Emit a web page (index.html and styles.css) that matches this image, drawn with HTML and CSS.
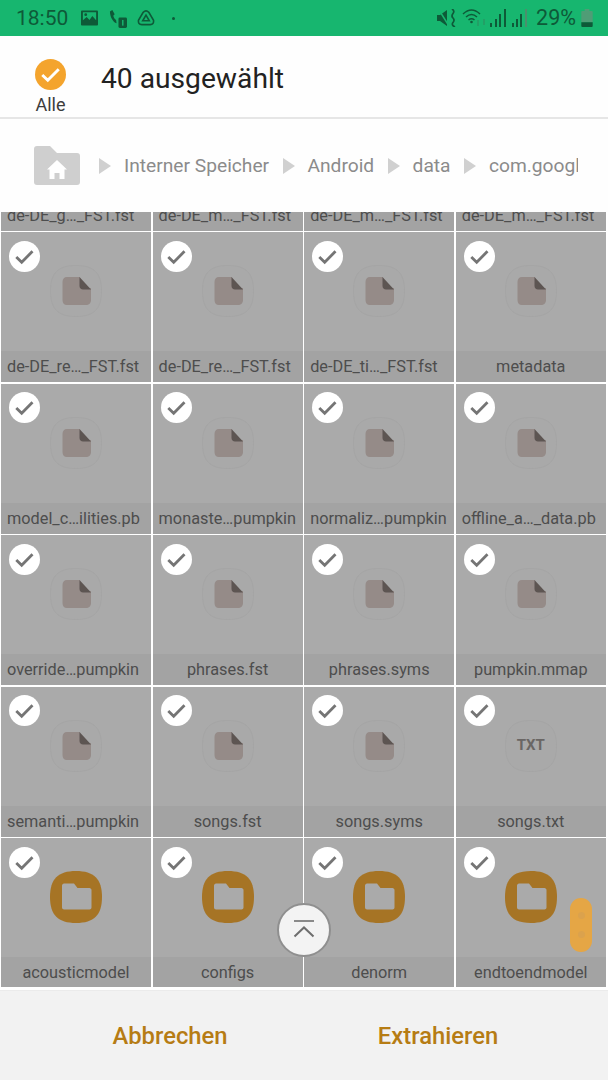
FILE: index.html
```html
<!DOCTYPE html>
<html lang="de">
<head>
<meta charset="utf-8">
<title>Extrahieren</title>
<link rel="stylesheet" href="styles.css">
</head>
<body>
<svg class="defs" width="0" height="0">
  <symbol id="check" viewBox="0 0 31 31"><circle cx="15.500" cy="15.500" r="15.500" fill="#fff"/><path d="M7.300 16 12.700 21.300 23.500 10.300" fill="none" stroke="#757575" stroke-width="2.800"/></symbol>
  <symbol id="file" viewBox="0 0 52 52"><path d="M26 .5C44 .5 51.500 8 51.500 26S44 51.500 26 51.500 .5 44 .5 26 8 .5 26 .5Z" fill="#a9a9a9" stroke="#a5a5a5" stroke-width="1"/><path d="M17 12H30V18C30 21 32 23 35 23H41V35C41 38 39 40 36 40H17C14 40 12.500 38 12.500 35V17C12.500 14 14 12 17 12Z" fill="#958b88"/><path d="M29.500 12 41 24.500H33C31 24.500 29.500 23 29.500 21Z" fill="#5d5552"/></symbol>
  <symbol id="folder" viewBox="0 0 52 52"><path d="M26 0C44 0 52 8 52 26S44 52 26 52 0 44 0 26 8 0 26 0Z" fill="#a67425"/><path d="M14 12.500H24L27.500 17H39.500C40.500 17 41.500 18 41.500 19V36.500C41.500 37.500 40.500 38.500 39.500 38.500H14C13 38.500 12 37.500 12 36.500V14.500C12 13.500 13 12.500 14 12.500Z" fill="#aaaaaa"/></symbol>
  <symbol id="txt" viewBox="0 0 52 52"><path d="M26 .5C44 .5 51.500 8 51.500 26S44 51.500 26 51.500 .5 44 .5 26 8 .5 26 .5Z" fill="#a9a9a9" stroke="#a5a5a5" stroke-width="1"/></symbol>
</svg>

<header class="status">
  <span class="status-text">18:50</span>
  <svg class="si s-img" width="17" height="16" viewBox="0 0 18 16"><path fill="#0e5a38" d="M1 0H17a1 1 0 0 1 1 1V15a1 1 0 0 1-1 1H1a1 1 0 0 1-1-1V1A1 1 0 0 1 1 0Z"/><path fill="#17b66f" d="M2 10.500 6 7l3 3 3-4 4 4.500V2H2Z"/><circle cx="5" cy="4.500" r="1.500" fill="#0e5a38"/></svg>
  <svg class="si s-call" width="18" height="18" viewBox="0 0 19 19"><path fill="#0e5a38" d="M1 1.500 3.500 0 6 4.500 4.500 6C5 8 6 9.500 7.500 10.500L8 14C4 12.500 1 7 1 1.500Z"/><rect x="10" y="8" width="9" height="11" rx="1.500" fill="#0e5a38"/><rect x="13.800" y="10.500" width="1.500" height="6" fill="#17b66f"/></svg>
  <svg class="si s-drive" width="18" height="16" viewBox="0 0 19 17"><path fill="none" stroke="#0e5a38" stroke-width="1.700" d="M6.500 2.500Q9.500-.5 12.500 2.500L17.500 11Q18 15.500 14 15.500H5Q1 15.500 1.500 11Z"/><path fill="none" stroke="#0e5a38" stroke-width="1.700" d="M9.500 5.500 13 11.500H6Z"/></svg>
  <span class="dot"></span>
  <svg class="si s-mute" width="19" height="18" viewBox="0 0 19 18"><path fill="#0e5a38" d="M0 6H3L10 1V17L3 12H0Z"/><path fill="none" stroke="#0e5a38" stroke-width="1.700" d="M15 0Q18 2 16 4.500T16 9 16 13.500 18 18"/><path stroke="#17b66f" stroke-width="1.500" d="M2 1 12 17"/></svg>
  <svg class="si s-wifi" width="24" height="18" viewBox="0 0 24 18"><g fill="none" stroke="#0e5a38" stroke-width="1.500"><path d="M1 6Q9.500-2 18 6"/><path d="M4 9Q9.500 4 15 9"/><path d="M6.500 12Q9.500 9.500 12.500 12"/></g><circle cx="9.500" cy="14" r="1.300" fill="#0e5a38"/><path stroke="#2f8a5e" d="M16 12V18M22 11V17"/></svg>
  <svg class="si s-sig1" width="16" height="18" viewBox="0 0 16 18"><path fill="#0e5a38" d="M0 14H2V18H0ZM5 10H7V18H5ZM9 5H11V18H9ZM14 0H16V18H14Z"/></svg>
  <svg class="si s-sig2" width="15" height="18" viewBox="0 0 15 18"><path fill="#0e5a38" d="M0 14H2V18H0ZM4 10H6V18H4ZM8 5H10V18H8Z"/><path fill="#4c8f6c" d="M13 0H15V18H13Z"/></svg>
  <span class="status-text pct">29%</span>
  <svg class="si s-bat" width="12" height="18" viewBox="0 0 12 19"><path fill="#4f9d76" d="M3.500 0H8.500V2H11a1 1 0 0 1 1 1V14H0V3a1 1 0 0 1 1-1H3.500Z"/><path fill="#0e5a38" d="M0 14H12V18a1 1 0 0 1-1 1H1a1 1 0 0 1-1-1Z"/></svg>
</header>

<section class="title-bar">
  <div class="all">
    <svg class="all-check" width="31" height="31" viewBox="0 0 32 32"><circle cx="16" cy="16" r="16" fill="#f4a42d"/><path d="M7.500 16.500 13.200 22 24.500 10.500" fill="none" stroke="#fff" stroke-width="3"/></svg>
    <span class="all-label">Alle</span>
  </div>
  <h1 class="count">40 ausgewählt</h1>
</section>

<nav class="crumbs">
  <svg class="home" width="46" height="39" viewBox="0 0 46 39"><path fill="#cfcfcf" d="M3 0H16L23 7H43a3 3 0 0 1 3 3V36a3 3 0 0 1-3 3H3a3 3 0 0 1-3-3V3A3 3 0 0 1 3 0Z"/><path fill="#fff" d="M23 14 33 23.500H30.500V33H25.500V27H20.500V33H15.500V23.500H13Z"/></svg>
  <div class="crumb-path">
    <i class="tri"></i><span>Interner Speicher</span>
    <i class="tri"></i><span>Android</span>
    <i class="tri"></i><span>data</span>
    <i class="tri"></i><span>com.googl</span>
  </div>
</nav>

<main class="grid-wrap">
  <div class="grid">
    <article class="cell"><div class="thumb"></div><div class="name long">de-DE_g…_FST.fst</div></article>
    <article class="cell"><div class="thumb"></div><div class="name long">de-DE_m…_FST.fst</div></article>
    <article class="cell"><div class="thumb"></div><div class="name long">de-DE_m…_FST.fst</div></article>
    <article class="cell"><div class="thumb"></div><div class="name long">de-DE_m…_FST.fst</div></article>

    <article class="cell"><div class="thumb"><svg class="chk"><use href="#check"/></svg><svg class="ico"><use href="#file"/></svg></div><div class="name long">de-DE_re…_FST.fst</div></article>
    <article class="cell"><div class="thumb"><svg class="chk"><use href="#check"/></svg><svg class="ico"><use href="#file"/></svg></div><div class="name long">de-DE_re…_FST.fst</div></article>
    <article class="cell"><div class="thumb"><svg class="chk"><use href="#check"/></svg><svg class="ico"><use href="#file"/></svg></div><div class="name long">de-DE_ti…_FST.fst</div></article>
    <article class="cell"><div class="thumb"><svg class="chk"><use href="#check"/></svg><svg class="ico"><use href="#file"/></svg></div><div class="name">metadata</div></article>

    <article class="cell"><div class="thumb"><svg class="chk"><use href="#check"/></svg><svg class="ico"><use href="#file"/></svg></div><div class="name long">model_c…ilities.pb</div></article>
    <article class="cell"><div class="thumb"><svg class="chk"><use href="#check"/></svg><svg class="ico"><use href="#file"/></svg></div><div class="name long">monaste…pumpkin</div></article>
    <article class="cell"><div class="thumb"><svg class="chk"><use href="#check"/></svg><svg class="ico"><use href="#file"/></svg></div><div class="name long">normaliz…pumpkin</div></article>
    <article class="cell"><div class="thumb"><svg class="chk"><use href="#check"/></svg><svg class="ico"><use href="#file"/></svg></div><div class="name long">offline_a…_data.pb</div></article>

    <article class="cell"><div class="thumb"><svg class="chk"><use href="#check"/></svg><svg class="ico"><use href="#file"/></svg></div><div class="name long">override…pumpkin</div></article>
    <article class="cell"><div class="thumb"><svg class="chk"><use href="#check"/></svg><svg class="ico"><use href="#file"/></svg></div><div class="name">phrases.fst</div></article>
    <article class="cell"><div class="thumb"><svg class="chk"><use href="#check"/></svg><svg class="ico"><use href="#file"/></svg></div><div class="name">phrases.syms</div></article>
    <article class="cell"><div class="thumb"><svg class="chk"><use href="#check"/></svg><svg class="ico"><use href="#file"/></svg></div><div class="name">pumpkin.mmap</div></article>

    <article class="cell"><div class="thumb"><svg class="chk"><use href="#check"/></svg><svg class="ico"><use href="#file"/></svg></div><div class="name long">semanti…pumpkin</div></article>
    <article class="cell"><div class="thumb"><svg class="chk"><use href="#check"/></svg><svg class="ico"><use href="#file"/></svg></div><div class="name">songs.fst</div></article>
    <article class="cell"><div class="thumb"><svg class="chk"><use href="#check"/></svg><svg class="ico"><use href="#file"/></svg></div><div class="name">songs.syms</div></article>
    <article class="cell"><div class="thumb"><svg class="chk"><use href="#check"/></svg><svg class="ico"><use href="#txt"/></svg><span class="txt">TXT</span></div><div class="name">songs.txt</div></article>

    <article class="cell"><div class="thumb"><svg class="chk"><use href="#check"/></svg><svg class="ico"><use href="#folder"/></svg></div><div class="name">acousticmodel</div></article>
    <article class="cell"><div class="thumb"><svg class="chk"><use href="#check"/></svg><svg class="ico"><use href="#folder"/></svg></div><div class="name">configs</div></article>
    <article class="cell"><div class="thumb"><svg class="chk"><use href="#check"/></svg><svg class="ico"><use href="#folder"/></svg></div><div class="name">denorm</div></article>
    <article class="cell"><div class="thumb"><svg class="chk"><use href="#check"/></svg><svg class="ico"><use href="#folder"/></svg></div><div class="name">endtoendmodel</div></article>
  </div>
  <button class="to-top" type="button" aria-label="Nach oben">
    <svg width="24" height="18" viewBox="0 0 24 18"><path d="M2 1H22" stroke="#8a8a8a" stroke-width="2"/><path d="M2.500 16.500 12 7.500 21.500 16.500" fill="none" stroke="#6e6e6e" stroke-width="2"/></svg>
  </button>
  <div class="thumb-bar"><i></i><i></i></div>
</main>

<footer class="actions">
  <button class="action" type="button">Abbrechen</button>
  <button class="action" type="button">Extrahieren</button>
</footer>
</body>
</html>
```
FILE: styles.css
```css
* { box-sizing: border-box; }
html, body { margin: 0; padding: 0; }
body {
  width: 608px;
  height: 1080px;
  overflow: hidden;
  display: flex;
  flex-direction: column;
  background: #fff;
  font-family: Roboto, "Liberation Sans", sans-serif;
}
.defs { position: absolute; }

.status {
  height: 36px;
  flex: none;
  background: #17b66f;
  display: flex;
  align-items: center;
  padding: 0 15px 0 16px;
  color: #0e5a38;
}
.status-text { font-size: 21px; line-height: 36px; }
.pct { margin-left: 9px; font-size: 21.500px; }
.si { display: block; flex: none; }
.s-img { margin-left: 13px; }
.s-call { margin-left: 11px; margin-top: 2px; }
.s-drive { margin-left: 10px; }
.dot { width: 3px; height: 3px; border-radius: 50%; background: #0e5a38; margin-left: 17px; }
.s-mute { margin-left: auto; }
.s-wifi { margin-left: 6px; margin-top: -2px; }
.s-sig1 { margin-left: 4px; }
.s-sig2 { margin-left: 6px; }
.s-bat { margin-left: 5px; }

.title-bar {
  height: 83px;
  flex: none;
  display: flex;
  align-items: flex-start;
  border-bottom: 2px solid #e6e6e6;
  background: #fefefe;
}
.all {
  width: 101px;
  display: flex;
  flex-direction: column;
  align-items: center;
  padding-top: 23px;
}
.all-check { display: block; margin-right: 1px; }
.all-label { font-size: 18px; line-height: 20px; color: #3c3c3c; margin-top: 5px; }
.count {
  margin: 25px 0 0;
  font-size: 28.200px;
  line-height: 36px;
  font-weight: 400;
  color: #222;
}

.crumbs {
  height: 93px;
  flex: none;
  display: flex;
  align-items: flex-start;
  padding: 27px 30px 0 34px;
  background: #fefefe;
}
.home { display: block; flex: none; }
.crumb-path {
  display: flex;
  align-items: center;
  overflow: hidden;
  white-space: nowrap;
  font-size: 19.200px;
  line-height: 40px;
  color: #8b8b8b;
  margin-left: 19px;
}
.crumb-path span { flex: none; margin-left: 13px; margin-right: 13.400px; }
.tri {
  flex: none;
  width: 0;
  height: 0;
  border-left: 12px solid #d0d0d0;
  border-top: 8px solid transparent;
  border-bottom: 8px solid transparent;
}

.grid-wrap {
  position: relative;
  height: 775px;
  flex: none;
  overflow: hidden;
  background: #fff;
  display: flex;
  flex-direction: column;
  justify-content: flex-end;
}
.grid {
  flex: none;
  display: grid;
  grid-template-columns: repeat(4, 150px);
  grid-auto-rows: 150px;
  column-gap: 1.600px;
  row-gap: 1.400px;
  padding-left: 1px;
  margin-bottom: -1px;
}
.cell {
  background: #aaaaaa;
  display: flex;
  flex-direction: column;
  position: relative;
}
.thumb { position: relative; height: 119px; flex: none; }
.name {
  height: 31px;
  flex: none;
  background: #a3a3a3;
  color: #4d4d4d;
  font-size: 16.300px;
  line-height: 32px;
  text-align: center;
  white-space: nowrap;
}
.name.long { text-align: left; padding-left: 6px; }
.chk { position: absolute; left: 8px; top: 8.500px; width: 31px; height: 31px; }
.ico { position: absolute; left: 49px; top: 33px; width: 52px; height: 52px; }
.txt {
  position: absolute;
  left: 49px;
  top: 32px;
  width: 52px;
  text-align: center;
  font-size: 15px;
  font-weight: 700;
  line-height: 52px;
  color: #6a6664;
}

.to-top {
  position: absolute;
  left: 277px;
  top: 691px;
  width: 54px;
  height: 54px;
  padding: 0;
  border-radius: 50%;
  border: 2px solid #8f8f8f;
  background: #f3f3f3;
  display: flex;
  align-items: center;
  justify-content: center;
}
.to-top svg { display: block; margin-top: -2px; }
.thumb-bar {
  position: absolute;
  left: 570px;
  top: 686px;
  width: 22px;
  height: 54px;
  border-radius: 11px;
  background: #e5a645;
  display: flex;
  flex-direction: column;
  align-items: center;
  justify-content: center;
  gap: 12px;
}
.thumb-bar i { width: 7px; height: 7px; border-radius: 50%; background: #dba24d; }

.actions {
  flex: 1;
  margin-top: 3px;
  background: #f2f2f2;
  display: flex;
  align-items: center;
  border-top: 1px solid #ebebeb;
}
.action {
  flex: none;
  width: 268px;
  background: none;
  border: 0;
  padding: 0;
  font-family: inherit;
  font-size: 23.800px;
  font-weight: 500;
  color: #b67c14;
  text-align: center;
}
.action:first-child { margin-left: 36px; }
```
